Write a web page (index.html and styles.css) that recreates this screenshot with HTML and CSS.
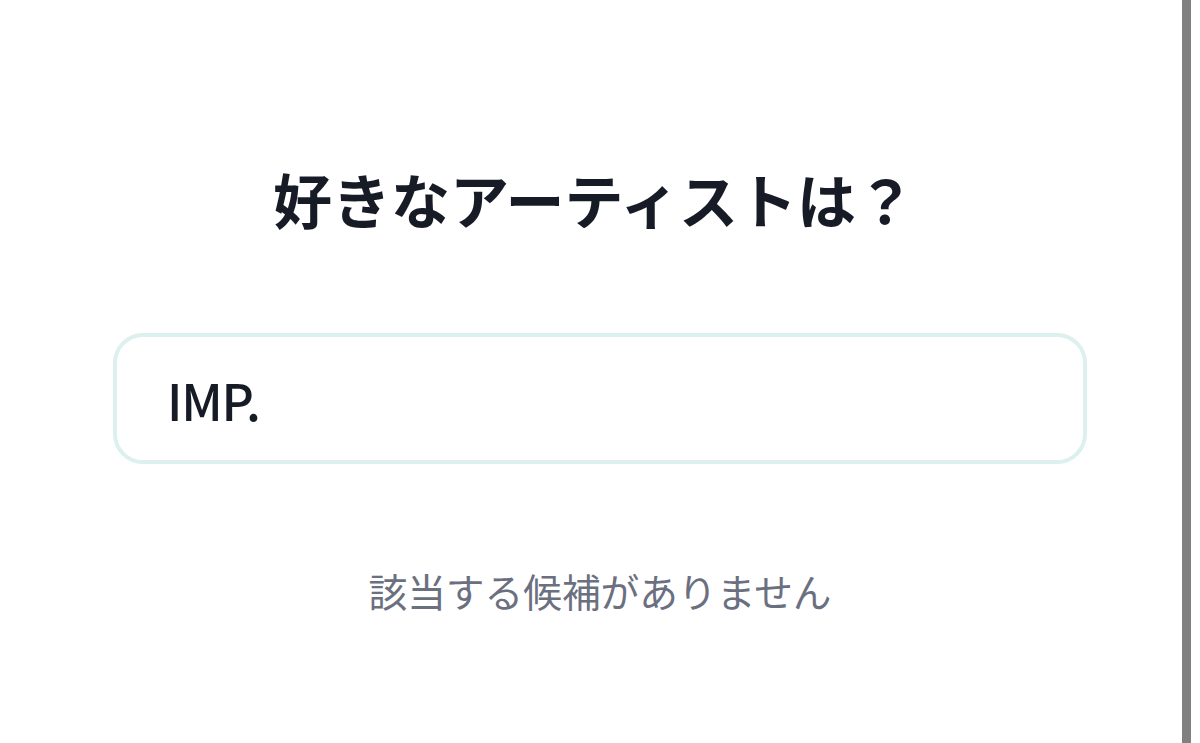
FILE: index.html
```html
<!DOCTYPE html>
<html lang="ja">
	<head>
		<meta charset="UTF-8">
		<title>好きなアーティスト</title>
		<link rel="stylesheet" href="styles.css">
	</head>
	<body>
		<main class="page">
			<h1 class="question">好きなアーティストは？</h1>
			<input class="search" type="text" value="IMP.">
			<p class="empty">該当する候補がありません</p>
		</main>
		<div class="scrollbar"></div>
	</body>
</html>
```

FILE: styles.css
```css
*{
	margin: 0;
	padding: 0;
	box-sizing: border-box;
}
html,body{
	height: 100%;
	background: #fff;
}
body{
	position: relative;
	overflow: hidden;
	font-family: "Noto Sans CJK JP", sans-serif;
	color: #161b26;
}
.page{
	display: flex;
	flex-direction: column;
	align-items: center;
	padding-top: 157px;
}
.question{
	font-size: 59px;
	font-weight: 700;
	line-height: 84px;
	padding-right: 12px;	/* 标题略偏左 */
}
.search{
	margin-top: 92px;
	width: 974px;
	height: 131px;
	border: 4px solid #dcf0ee;
	border-radius: 30px;
	padding-left: 50px;
	font-family: "Noto Sans CJK JP", sans-serif;
	font-size: 50px;
	font-weight: 500;
	letter-spacing: -1.2px;
	color: #161b26;
	outline: none;
	background: #fff;
}
.empty{
	margin-top: 98px;
	font-size: 38.7px;
	line-height: 56px;
	color: #6b7080;
}
/* right edge bar */
.scrollbar{
	position: absolute;
	top: 0;
	bottom: 0;
	right: 9px;
	width: 9px;
	background: #808080;
}
```
